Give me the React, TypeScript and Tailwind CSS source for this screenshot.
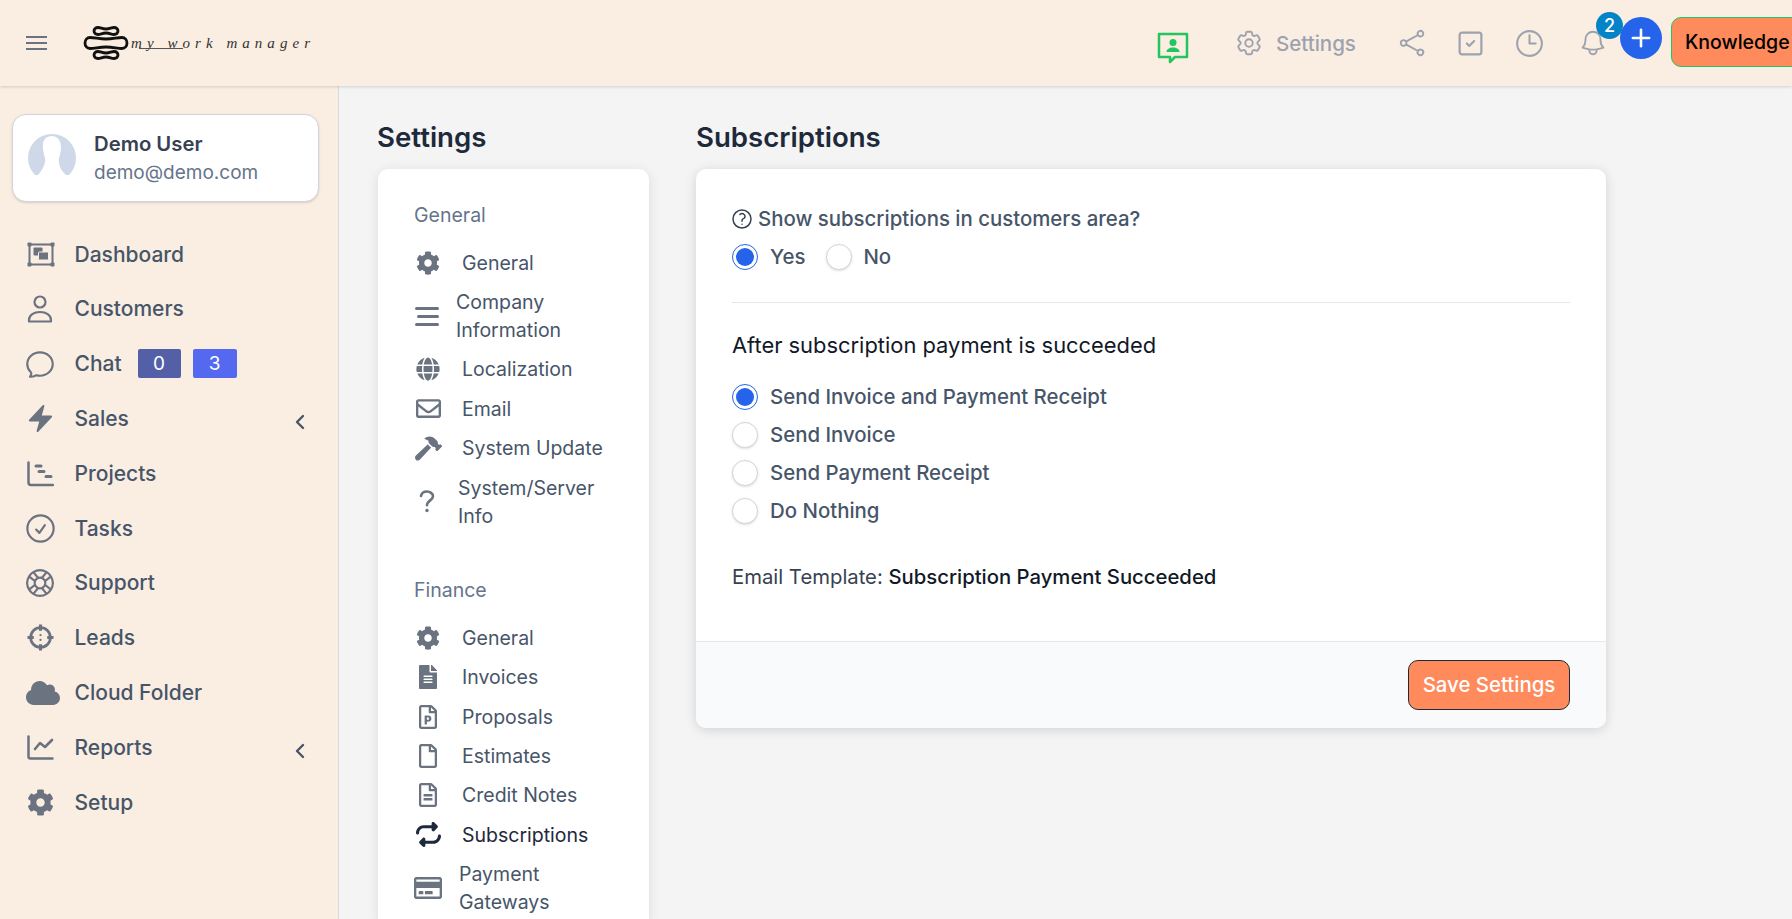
import type { ReactNode } from "react";
import {
  FaCloud,
  FaCog,
  FaFileAlt,
  FaGlobe,
  FaHammer,
  FaRegCreditCard,
  FaRegEnvelope,
  FaRegFile,
  FaRegFileAlt,
  FaRegFilePowerpoint,
} from "react-icons/fa";
import { FaRepeat } from "react-icons/fa6";
import {
  HiBolt,
  HiOutlineBell,
  HiOutlineChatBubbleOvalLeft,
  HiOutlineCheckCircle,
  HiOutlineClock,
  HiOutlineCog6Tooth,
  HiOutlineLifebuoy,
  HiOutlineQuestionMarkCircle,
  HiOutlineShare,
} from "react-icons/hi2";
import { ChevronLeft, Plus, SquareCheck } from "lucide-react";

function Logo() {
  return (
    <div className="flex w-[230px] shrink-0 items-center">
      <svg width="46" height="34" viewBox="0 0 46 34" fill="none" stroke="#111" strokeWidth="2.800" className="shrink-0">
        <path d="M15 1.500c3 0 4 1.500 8 1.500s5-1.500 8-1.500c2.500 0 4 1.700 4 3.500s-1.500 3.500-4 3.500c-3 0-4-1.500-8-1.500s-5 1.500-8 1.500c-2.500 0-4-1.700-4-3.500s1.500-3.500 4-3.500z" />
        <path d="M7 11.500c5 0 9 1.500 16 1.500s11-1.500 16-1.500c3 0 5 2.500 5 5.500s-2 5.500-5 5.500c-5 0-9-1.500-16-1.500s-11 1.500-16 1.500c-3 0-5-2.500-5-5.500s2-5.500 5-5.500z" />
        <path d="M15 25.500c3 0 4 1.500 8 1.500s5-1.500 8-1.500c2.500 0 4 1.700 4 3.500s-1.500 3.500-4 3.500c-3 0-4-1.500-8-1.500s-5 1.500-8 1.500c-2.500 0-4-1.700-4-3.500s1.500-3.500 4-3.500z" />
      </svg>
      <div className="relative ml-[2px] font-['Liberation_Serif',serif] text-[15px] italic tracking-[5.050px] whitespace-nowrap text-[#333]">
        my work manager
        <span className="absolute top-[16px] left-[8px] h-px w-[44px] bg-[#555]" />
      </div>
    </div>
  );
}

function Header() {
  return (
    <header className="relative z-10 flex h-[86px] shrink-0 items-center overflow-hidden bg-[#faede1] shadow-[0_1px_3px_rgba(0,0,0,0.15)]">
      <div className="ml-[26px] flex h-[14px] w-[21px] shrink-0 flex-col justify-between">
        <span className="h-[2px] bg-[#6b7280]" />
        <span className="h-[2px] bg-[#6b7280]" />
        <span className="h-[2px] bg-[#6b7280]" />
      </div>
      <div className="ml-[36px] shrink-0">
        <Logo />
      </div>
      <div className="ml-[844px] flex shrink-0 items-center [&>svg]:shrink-0">
        <svg width="32" height="32" viewBox="0 0 32 32" fill="none" className="mt-[9px]">
          <path d="M2 2h28v23H18l-5 5v-5H2z" stroke="#22c55e" strokeWidth="2.500" strokeLinejoin="round" />
          <circle cx="16" cy="10.500" r="3.500" fill="#22c55e" />
          <path d="M9.500 20c0-3 3-4.500 6.500-4.500s6.500 1.500 6.500 4.500z" fill="#22c55e" />
        </svg>
        <HiOutlineCog6Tooth className="ml-[45px] size-[30px] text-[#9ca3af]" />
        <span className="mt-[2px] ml-[12px] text-[20.500px] font-medium text-[#9ca3af]">Settings</span>
        <HiOutlineShare className="ml-[41px] size-[30px] text-[#9ca3af]" />
        <SquareCheck className="ml-[29px] size-[29px] text-[#9ca3af]" strokeWidth={1.8} />
        <HiOutlineClock className="ml-[28px] size-[33px] text-[#9ca3af]" />
        <div className="relative ml-[32px] shrink-0">
          <HiOutlineBell className="size-[30px] text-[#9ca3af]" />
          <span className="absolute -top-[16px] left-[18px] flex size-[27px] items-center justify-center rounded-full bg-[#0284c7] text-[18px] font-medium text-white">
            2
          </span>
        </div>
        <div className="-mt-[10px] ml-[12px] flex size-[42px] shrink-0 items-center justify-center rounded-full bg-[#2563eb]">
          <Plus className="size-[28px] text-white" strokeWidth={2.2} />
        </div>
        <div className="-mt-[3px] ml-[9px] flex h-[50px] w-[200px] shrink-0 items-center rounded-[10px] border border-[#22c55e] bg-[#ff8a5c] pl-[13px] text-[19.500px] font-medium whitespace-nowrap text-black">
          <span className="pt-[2px]">Knowledge</span>
        </div>
      </div>
    </header>
  );
}

function DashboardIcon() {
  return (
    <svg width="28" height="25" viewBox="0 0 28 25" fill="none" className="ml-[2px]">
      <rect x="2.500" y="2.500" width="23" height="20" stroke="#6b7280" strokeWidth="2" />
      <rect x="0.500" y="0.500" width="4" height="4" rx="1" fill="#6b7280" />
      <rect x="23.500" y="0.500" width="4" height="4" rx="1" fill="#6b7280" />
      <rect x="0.500" y="20.500" width="4" height="4" rx="1" fill="#6b7280" />
      <rect x="23.500" y="20.500" width="4" height="4" rx="1" fill="#6b7280" />
      <rect x="6.500" y="5.500" width="9" height="8" rx="1" fill="#6b7280" />
      <rect x="11.500" y="10" width="10" height="8" rx="1" fill="#6b7280" stroke="#faede1" strokeWidth="1" />
    </svg>
  );
}

function UserIcon() {
  return (
    <svg width="26" height="28" viewBox="0 0 26 28" fill="none" stroke="#6b7280" strokeWidth="2.200">
      <circle cx="13" cy="7" r="5.500" />
      <path d="M2 26.500v-1.500c0-5 5-8 11-8s11 3 11 8v1.500z" strokeLinejoin="round" />
    </svg>
  );
}

function LeadsIcon() {
  return (
    <svg width="27" height="27" viewBox="0 0 26 26" fill="none" stroke="#6b7280" strokeWidth="2.600">
      <circle cx="13" cy="13" r="9.500" />
      <path d="M13 0.500v6M13 19.500v6M0.500 13h6M19.500 13h6" strokeWidth="3" />
      <circle cx="13" cy="10.700" r="1.100" fill="#6b7280" stroke="none" />
      <circle cx="13" cy="15.300" r="1.100" fill="#6b7280" stroke="none" />
    </svg>
  );
}

function GanttIcon() {
  return (
    <svg width="27" height="26" viewBox="0 0 27 26" fill="none" stroke="#6b7280" strokeLinecap="round">
      <path d="M1.500 1.500v20a2.500 2.500 0 0 0 2.500 2.500h22" strokeWidth="2.500" />
      <path d="M9 5h5M12 10.500h5M19 15.500h5" strokeWidth="3" />
    </svg>
  );
}

function ReportsIcon() {
  return (
    <svg width="27" height="25" viewBox="0 0 27 25" fill="none" stroke="#6b7280" strokeLinecap="round" strokeLinejoin="round">
      <path d="M1.500 1.500v20a2 2 0 0 0 2 2h22" strokeWidth="2.500" />
      <path d="M8 14l5-6 5 4 7-7" strokeWidth="2.600" />
    </svg>
  );
}

const sidebarItems: { label: string; icon: ReactNode; arrow?: boolean; badges?: boolean }[] = [
  { label: "Dashboard", icon: <DashboardIcon /> },
  { label: "Customers", icon: <UserIcon /> },
  { label: "Chat", icon: <HiOutlineChatBubbleOvalLeft className="size-[34px]" />, badges: true },
  { label: "Sales", icon: <HiBolt className="size-[31px]" />, arrow: true },
  { label: "Projects", icon: <GanttIcon /> },
  { label: "Tasks", icon: <HiOutlineCheckCircle className="size-[35px]" /> },
  { label: "Support", icon: <HiOutlineLifebuoy className="size-[34px]" /> },
  { label: "Leads", icon: <LeadsIcon /> },
  { label: "Cloud Folder", icon: <FaCloud className="ml-[5px] size-[34px]" /> },
  { label: "Reports", icon: <ReportsIcon />, arrow: true },
  { label: "Setup", icon: <FaCog className="size-[27px]" /> },
];

function Sidebar() {
  return (
    <aside className="flex w-[339px] shrink-0 flex-col border-r border-[#d5dbe6] bg-[#faede1] font-medium">
      <div className="mt-[28px] ml-[12px] flex h-[88px] w-[307px] items-center rounded-[14px] border border-[#d1d5db] bg-white pl-[15px] shadow-sm">
        <svg width="48" height="48" viewBox="0 0 48 48" className="shrink-0">
          <circle cx="24" cy="24" r="24" fill="#cfd8e8" />
          <path d="M24 2C17 2 14 7 15 15c.5 6 3 9 2 13-1 5-3 8-7 13l-6 0v7h40v-7l-6 0c-4-4-7-8-7-13-1-4 2-8 2-14 0-7-3-12-9-12z" fill="#fff" />
        </svg>
        <div className="ml-[18px]">
          <div className="text-[20.300px] leading-[28px] font-semibold text-[#374151]">Demo User</div>
          <div className="mt-[1px] text-[19px] leading-[28px] font-normal text-[#64748b]">demo@demo.com</div>
        </div>
      </div>
      <nav className="mt-[25px] flex flex-col">
        {sidebarItems.map((item) => (
          <div key={item.label} className="relative flex h-[54.800px] items-center pl-[74.500px] text-[21px] text-[#475569]">
            <span className="absolute left-[26px] flex w-[28px] justify-center text-[#6b7280] [&>svg]:shrink-0">{item.icon}</span>
            {item.label}
            {item.badges && (
              <div className="ml-[16px] flex gap-[12px] text-[19px] font-normal text-white">
                <span className="flex h-[29px] w-[43px] items-center justify-center rounded-[2px] bg-[#535fa6]">0</span>
                <span className="flex h-[29px] w-[44px] items-center justify-center rounded-[2px] bg-[#5469ef]">3</span>
              </div>
            )}
            {item.arrow && <ChevronLeft className="absolute left-[288px] mt-[6px] size-[24px] text-[#475569]" strokeWidth={2.4} />}
          </div>
        ))}
      </nav>
    </aside>
  );
}

type MenuEntry = { label: ReactNode; icon: ReactNode; textLeft?: string; active?: boolean };

const generalMenu: MenuEntry[] = [
  { label: "General", icon: <FaCog className="size-[24px]" /> },
  {
    label: (
      <>
        Company
        <br />
        Information
      </>
    ),
    icon: (
      <span className="-ml-[3px] flex h-[19px] w-[24px] flex-col justify-between">
        <span className="h-[3px] rounded-full bg-[#6b7280]" />
        <span className="ml-[2px] h-[3px] rounded-full bg-[#6b7280]" />
        <span className="h-[3px] rounded-full bg-[#6b7280]" />
      </span>
    ),
    textLeft: "pl-[78px]",
  },
  { label: "Localization", icon: <FaGlobe className="size-[24px]" /> },
  { label: "Email", icon: <FaRegEnvelope className="size-[25px]" /> },
  { label: "System Update", icon: <FaHammer className="size-[27px]" /> },
  {
    label: (
      <>
        System/Server
        <br />
        Info
      </>
    ),
    icon: (
      <svg width="16" height="23" viewBox="0 0 16 23" fill="none" stroke="#6b7280" strokeWidth="2.600" strokeLinecap="round" className="-ml-[3px]">
        <path d="M2 6c.5-3 3-4.500 6-4.500s6 2 6 4.800c0 4-6 4.200-6 9" />
        <circle cx="8" cy="20.500" r="1.700" fill="#6b7280" stroke="none" />
      </svg>
    ),
    textLeft: "pl-[80px]",
  },
];

const financeMenu: MenuEntry[] = [
  { label: "General", icon: <FaCog className="size-[24px]" /> },
  { label: "Invoices", icon: <FaFileAlt className="size-[24px]" /> },
  { label: "Proposals", icon: <FaRegFilePowerpoint className="size-[24px]" /> },
  { label: "Estimates", icon: <FaRegFile className="size-[24px]" /> },
  { label: "Credit Notes", icon: <FaRegFileAlt className="size-[24px]" /> },
  { label: "Subscriptions", icon: <FaRepeat className="size-[25px]" />, active: true },
  {
    label: (
      <>
        Payment
        <br />
        Gateways
      </>
    ),
    icon: <FaRegCreditCard className="size-[28px]" />,
    textLeft: "pl-[81px]",
  },
];

function MenuRow({ item }: { item: MenuEntry }) {
  return (
    <div className={`relative flex items-center py-[5.700px] text-[19.500px] leading-[28px] ${item.textLeft ?? "pl-[84px]"} ${item.active ? "text-[#1e293b]" : "text-[#475569]"}`}>
      <span className={`absolute left-[36px] flex w-[28px] justify-center ${item.active ? "text-[#1e293b]" : "text-[#6b7280]"}`}>{item.icon}</span>
      <span>{item.label}</span>
    </div>
  );
}

function SettingsMenu() {
  return (
    <div className="w-[271px] shrink-0">
      <h2 className="mt-[31px] ml-[-1px] text-[27.600px] leading-[40px] font-semibold text-[#1e293b]">Settings</h2>
      <div className="mt-[12px] rounded-t-[10px] bg-white pt-[32px] shadow-[0_2px_12px_rgba(0,0,0,0.1)]">
        <div className="pl-[36px] text-[19.500px] leading-[28px] text-[#64748b]">General</div>
        <div className="mt-[14px]">
          {generalMenu.map((item, i) => (
            <MenuRow key={i} item={item} />
          ))}
        </div>
        <div className="mt-[41px] pl-[36px] text-[19.500px] leading-[28px] text-[#64748b]">Finance</div>
        <div className="mt-[14px]">
          {financeMenu.map((item, i) => (
            <MenuRow key={i} item={item} />
          ))}
        </div>
      </div>
    </div>
  );
}

function Radio({ checked }: { checked?: boolean }) {
  return (
    <span className={`flex size-[26px] shrink-0 items-center justify-center rounded-full border bg-white ${checked ? "border-[#2563eb]" : "border-[#d1d5db] shadow-sm"}`}>
      {checked && <span className="size-[18px] rounded-full bg-[#2563eb]" />}
    </span>
  );
}

function RadioRow({ label, checked }: { label: string; checked?: boolean }) {
  return (
    <div className="flex h-[38px] items-center gap-[12px] text-[20.400px] font-medium text-[#475569]">
      <Radio checked={checked} />
      {label}
    </div>
  );
}

function SubscriptionsCard() {
  return (
    <div className="ml-[47px] w-[910px] shrink-0">
      <h2 className="mt-[31px] text-[27.600px] leading-[40px] font-semibold text-[#1e293b]">Subscriptions</h2>
      <div className="mt-[12px] overflow-hidden rounded-[10px] bg-white shadow-[0_2px_12px_rgba(0,0,0,0.14)]">
        <div className="h-[472px] px-[36px] pt-[36px]">
          <div className="flex items-center gap-[4px] text-[20.400px] leading-[28px] font-medium text-[#475569]">
            <HiOutlineQuestionMarkCircle className="-ml-[2px] size-[24px] shrink-0 text-[#374151]" />
            Show subscriptions in customers area?
          </div>
          <div className="mt-[5px] flex h-[38px] items-center text-[20.400px] font-medium text-[#475569]">
            <Radio checked />
            <span className="ml-[12px]">Yes</span>
            <span className="ml-[21px]">
              <Radio />
            </span>
            <span className="ml-[11px]">No</span>
          </div>
          <div className="mt-[26px] border-t border-[#e5e7eb]" />
          <div className="mt-[27px] text-[21.900px] leading-[30px] font-normal text-[#111827]">After subscription payment is succeeded</div>
          <div className="mt-[18px] flex flex-col">
            <RadioRow label="Send Invoice and Payment Receipt" checked />
            <RadioRow label="Send Invoice" />
            <RadioRow label="Send Payment Receipt" />
            <RadioRow label="Do Nothing" />
          </div>
          <div className="mt-[33px] text-[20.300px] leading-[28px] text-[#374151]">
            Email Template: <span className="font-medium text-[#111827]">Subscription Payment Succeeded</span>
          </div>
        </div>
        <div className="flex h-[87px] items-center justify-end border-t border-[#e5e7eb] bg-[#f9fafb] pr-[36px]">
          <button className="flex h-[50px] w-[162px] items-center justify-center rounded-[10px] border border-[#1f2937] bg-[#ff8a5c] text-[20.400px] font-medium text-white">
            Save Settings
          </button>
        </div>
      </div>
    </div>
  );
}

export default function App() {
  return (
    <div className="flex h-screen flex-col overflow-hidden bg-[#f4f4f4] font-['Inter',sans-serif]">
      <Header />
      <div className="flex min-h-0 flex-1">
        <Sidebar />
        <main className="flex min-w-0 flex-1 overflow-hidden pl-[39px]">
          <SettingsMenu />
          <SubscriptionsCard />
        </main>
      </div>
    </div>
  );
}
